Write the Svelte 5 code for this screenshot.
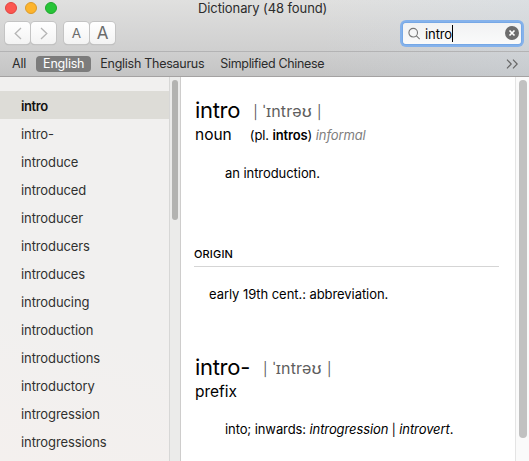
<script>
  const words = ['intro', 'intro-', 'introduce', 'introduced', 'introducer', 'introducers', 'introduces', 'introducing', 'introduction', 'introductions', 'introductory', 'introgression', 'introgressions'];
  const sources = ['All', 'English', 'English Thesaurus', 'Simplified Chinese'];
  let selectedWord = $state('intro');
  let selectedSource = $state('English');
</script>

<div class="window">
  <header>
    <div class="titlebar">
      <div class="lights"><i class="red"></i><i class="amber"></i><i class="green"></i></div>
      <div class="title">Dictionary (48 found)</div>
    </div>
    <div class="toolbar">
      <div class="pair nav">
        <button aria-label="Back"><svg width="8" height="13" viewBox="0 0 8 13"><path d="M7 1 1.2 6.5 7 12" /></svg></button>
        <button aria-label="Forward"><svg width="8" height="13" viewBox="0 0 8 13"><path d="M1 1 6.8 6.5 1 12" /></svg></button>
      </div>
      <div class="pair sizes">
        <button class="small">A</button>
        <button class="large">A</button>
      </div>
      <div class="search">
        <svg class="glass" width="13" height="13" viewBox="0 0 13 13"><circle cx="5.2" cy="5.7" r="4.3" /><path d="M8.4 8.9 11.7 12.2" /></svg>
        <span class="query">intro</span><span class="caret"></span>
        <svg class="clear" width="14" height="14" viewBox="0 0 14 14"><circle cx="7" cy="7" r="7" /><path d="M4.5 4.5 9.5 9.5M9.5 4.5 4.5 9.5" /></svg>
      </div>
    </div>
    <nav>
      {#each sources as source}
        <button class:active={source === selectedSource} onclick={() => (selectedSource = source)}>{source}</button>
      {/each}
      <svg class="more" width="12" height="10" viewBox="0 0 12 10"><path d="M1 .7 5.2 5 1 9.3M7 .7 11.2 5 7 9.3" /></svg>
    </nav>
  </header>

  <main>
    <aside>
      <ul>
        {#each words as word}
          <li class:active={word === selectedWord}><button onclick={() => (selectedWord = word)}>{word}</button></li>
        {/each}
      </ul>
      <div class="track left"><div class="thumb"></div></div>
    </aside>
    <article>
      <section class="first">
        <h1><span class="head">intro</span><span class="ipa"><span class="bar">|</span>ˈɪntrəʊ<span class="bar">|</span></span></h1>
        <div class="pos"><span class="kind">noun</span><span class="forms">(pl. <b>intros</b>) <em>informal</em></span></div>
        <p class="def">an introduction.</p>
        <h2>ORIGIN</h2>
        <p class="origin">early 19th cent.: abbreviation.</p>
      </section>
      <section class="second">
        <h1><span class="head">intro-</span><span class="ipa"><span class="bar">|</span>ˈɪntrəʊ<span class="bar">|</span></span></h1>
        <div class="pos"><span class="kind">prefix</span></div>
        <p class="def two">into; inwards: <em>introgression</em> <span class="sep">|</span> <em>introvert</em>.</p>
      </section>
    </article>
    <div class="track right"><div class="thumb"></div></div>
  </main>
</div>

<style>
  :global(body) { margin: 0; overflow: hidden; }
  .window { width: 529px; height: 461px; display: flex; flex-direction: column; overflow: hidden; font: 13px/16px Inter, "Noto Sans", sans-serif; color: #2c2c2c; background: #fff; }
  button { font: inherit; color: inherit; letter-spacing: inherit; border: 0; padding: 0; margin: 0; background: none; }
  svg { display: block; fill: none; flex: none; }
  header { height: 77px; box-sizing: border-box; border-bottom: 1px solid #a4a2a2; background: linear-gradient(90deg, transparent 60%, rgba(205, 220, 235, .25)), linear-gradient(#e0e0df, #cfcfcf 51px, #c4c4c4); flex: none; }
  .titlebar { height: 20px; display: grid; grid-template-columns: 198px 1fr; }
  .lights { display: flex; gap: 8px; padding: 2px 0 0 5px; }
  .lights i { width: 12px; height: 12px; box-sizing: border-box; border-radius: 50%; }
  .red { background: #fc5650; border: 1px solid #e0443f; }
  .amber { background: #fdb42c; border: 1px solid #dc9b28; }
  .green { background: #27c438; border: 1px solid #1ea72c; }
  .title { white-space: nowrap; letter-spacing: -.1px; }
  .toolbar { height: 31px; display: flex; border-bottom: 1px solid #b3b3b4; }
  .pair { display: flex; gap: 1px; height: 22px; margin-top: 2px; }
  .nav { margin-left: 5px; }
  .sizes { margin-left: 8px; }
  .pair button { width: 25px; height: 22px; display: flex; align-items: center; justify-content: center; background: linear-gradient(#fff, #f3f3f3); border-radius: 4px; box-shadow: 0 0 0 1px #c4c4c4, 0 1px 1px #aaa; color: #6b6b6b; }
  .pair svg { stroke: #b5b5b5; stroke-width: 1.3; }
  .pair .small { font-size: 13.5px; }
  .pair .large { font-size: 17px; }
  .search { margin: 3px 8px 0 auto; width: 118px; height: 21px; display: flex; align-items: center; background: linear-gradient(#f1f2f3, #fafafa); border-radius: 3px; box-shadow: 0 0 0 1px #76a8e6, 0 0 0 3px #85b2eb; box-sizing: border-box; padding: 0 2px 0 5px; color: #000; }
  .glass { stroke: #777; stroke-width: 1.1; }
  .query { margin-left: 4px; letter-spacing: -.1px; }
  .caret { width: 1px; height: 17px; margin-top: -1px; background: #000; }
  .clear { margin-left: auto; margin-top: -1px; fill: #6d6d6d; }
  .clear path { stroke: #fff; stroke-width: 1.7; }
  nav { height: 24px; display: flex; align-items: center; padding: 0 11px 0 5px; letter-spacing: -.2px; font-size: 12.5px; }
  nav button { padding: 0 7px; height: 16px; line-height: 16px; margin-right: 2px; border-radius: 4px; white-space: nowrap; }
  nav .active { background: #7c7c7c; color: #fff; margin-left: 1px; }
  nav button:nth-child(3) { letter-spacing: -.27px; }
  nav button:nth-child(4) { letter-spacing: -.33px; }
  .more { margin-left: auto; stroke: #666; stroke-width: 1.2; }
  main { flex: 1; display: flex; min-height: 0; }
  aside { width: 181px; display: flex; flex: none; background: linear-gradient(15deg, #f4f0ee, #f1f0ef 35%); }
  ul { width: 169px; margin: 0; padding: 14px 0 0; list-style: none; }
  li { height: 28px; display: flex; align-items: center; padding: 2px 0 0 21px; box-sizing: border-box; color: #30302f; letter-spacing: -.1px; }
  li.active { background: #dddcd7; color: #111; font-weight: 600; letter-spacing: -.4px; }
  .track { box-sizing: border-box; flex: none; }
  .left { width: 12px; border-left: 1px solid #d7d7d6; border-right: 1px solid #cecdcc; background: #ebebea; padding: 3px 0 0 2px; }
  .left .thumb { width: 6px; height: 140px; border-radius: 3px; background: #b3b3b1; }
  .right { width: 14px; border-left: 1px solid #e4e4e4; background: #fafafa; padding: 3px 0 0 3px; }
  .right .thumb { width: 8px; height: 358px; border-radius: 4px; background: #c1c1c1; }
  article { flex: 1; min-width: 0; color: #000; padding: 20px 16px 0 13px; }
  h1, h2, p { margin: 0; font-weight: 400; white-space: nowrap; }
  h1 { height: 28px; line-height: 27px; display: flex; align-items: baseline; padding-left: 1px; }
  .head { font-size: 22px; letter-spacing: -.3px; }
  .ipa { position: relative; top: -1px; font-size: 16px; color: #5f5f5f; margin-left: 13px; letter-spacing: .2px; display: flex; align-items: baseline; gap: 5px; }
  .bar { font-size: 13.5px; line-height: 16px; }
  .pos { height: 20px; display: flex; align-items: baseline; line-height: 19px; padding-left: 1px; }
  .kind { font-size: 15.5px; letter-spacing: 0; }
  .forms { margin-left: 18px; letter-spacing: -.12px; }
  b { font-weight: 600; }
  .forms em { color: #808080; }
  .def { margin: 20px 0 0 31px; letter-spacing: -.06px; }
  .sep { font-size: 12px; }
  h2 { margin-top: 65px; height: 20px; font-size: 11px; font-weight: 500; letter-spacing: .15px; border-bottom: 1px solid #d5d5d5; }
  .origin { margin: 19px 0 0 15px; letter-spacing: -.06px; }
  .second { margin-top: 52px; }
  .second .def { margin-top: 19px; letter-spacing: -.1px; }
</style>
